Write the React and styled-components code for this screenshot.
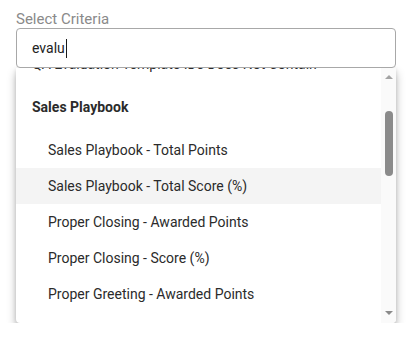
import React from "react";
import styled, { createGlobalStyle } from "styled-components";

const GlobalStyle = createGlobalStyle`
  body {
    margin: 0;
    background: #ffffff;
    font-family: Roboto, "Liberation Sans", sans-serif;
  }
`;

const Wrapper = styled.div`
  padding: 10px 14px 0 16px;
  width: 380px;
`;

const Label = styled.div`
  font-size: 15px;
  line-height: 18px;
  color: #8a8a8a;
`;

const InputBox = styled.div`
  position: relative;
  z-index: 2;
  box-sizing: border-box;
  height: 40px;
  border: 1px solid #a8a8a8;
  border-radius: 4px;
  background: #fff;
  display: flex;
  align-items: center;
  padding-left: 15px;
  font-size: 14px;
  color: #222;
`;

const Caret = styled.span`
  display: inline-block;
  width: 1px;
  height: 19px;
  margin-left: 1px;
  background: #1a1a1a;
`;

const Dropdown = styled.div`
  display: flex;
  height: 255px;
  background: #fff;
  border-radius: 0 0 4px 4px;
  box-shadow: 0 5px 10px rgba(0, 0, 0, 0.28), 0 1px 4px rgba(0, 0, 0, 0.12);
  overflow: hidden;
`;

const List = styled.div`
  flex: 1;
  overflow: hidden;
`;

const Inner = styled.div`
  margin-top: -22px;
`;

const Option = styled.div`
  height: 36px;
  display: flex;
  align-items: center;
  padding-left: ${(p) => (p.$top ? 16 : 32)}px;
  font-size: 14px;
  color: #2b2b2b;
  background: ${(p) => (p.$active ? "#f4f4f4" : "transparent")};
  white-space: nowrap;
`;

const GroupHeader = styled.div`
  height: 50px;
  display: flex;
  align-items: center;
  padding-left: 16px;
  font-size: 14px;
  font-weight: 700;
  color: #2b2b2b;
`;

const Scrollbar = styled.div`
  width: 15px;
  background: #fafafa;
  display: flex;
  flex-direction: column;
  align-items: center;
`;

const Arrow = styled.div`
  width: 0;
  height: 0;
  border-left: 4px solid transparent;
  border-right: 4px solid transparent;
  ${(p) =>
    p.$down
      ? `border-top: 4px solid #8a8a8a; margin-top: auto; margin-bottom: 8px;`
      : `border-bottom: 4px solid #a3a3a3; margin-top: 7px;`}
`;

const Thumb = styled.div`
  width: 8px;
  height: 65px;
  margin-top: 32px;
  border-radius: 4px;
  background: #8b8b8b;
`;

const items = [
  "Sales Playbook - Total Points",
  "Sales Playbook - Total Score (%)",
  "Proper Closing - Awarded Points",
  "Proper Closing - Score (%)",
  "Proper Greeting - Awarded Points",
];

export default function App() {
  return (
    <>
      <GlobalStyle />
      <Wrapper>
        <Label>Select Criteria</Label>
        <InputBox>
          evalu
          <Caret />
        </InputBox>
        <Dropdown>
          <List>
            <Inner>
              <Option $top>QA Evaluation Template IDs Does Not Contain</Option>
              <GroupHeader>Sales Playbook</GroupHeader>
              {items.map((item, i) => (
                <Option key={item} $active={i === 1}>
                  {item}
                </Option>
              ))}
            </Inner>
          </List>
          <Scrollbar>
            <Arrow />
            <Thumb />
            <Arrow $down />
          </Scrollbar>
        </Dropdown>
      </Wrapper>
    </>
  );
}
